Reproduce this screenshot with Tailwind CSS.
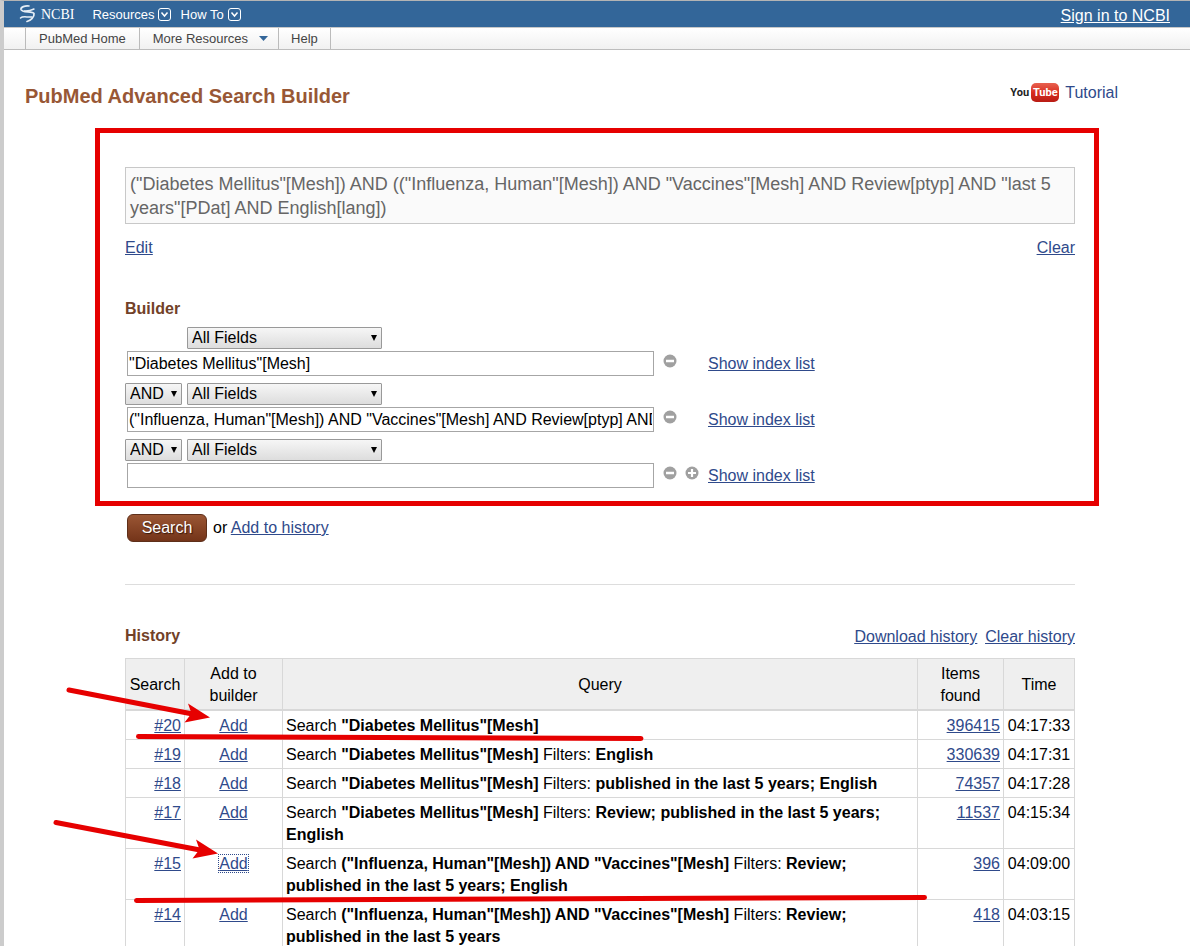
<!DOCTYPE html>
<html lang="en">
<head>
<meta charset="utf-8">
<title>PubMed Advanced Search Builder</title>
<script src="https://cdn.jsdelivr.net/npm/@tailwindcss/browser@4"></script>
</head>
<body class="bg-white font-['Liberation_Sans',Arial,sans-serif] text-base text-black">
<div class="min-h-screen overflow-hidden border-t border-l-4 border-t-[#b4b4b4] border-l-[#cccccc]">
  <header class="flex h-[26px] items-center bg-[#336699] pr-5 pl-[15px] text-[13px] text-white">
    <a href="#" class="flex items-center">
      <svg class="h-5 w-[18px]" viewBox="0 0 18 20" fill="none" stroke="#e6eef6" stroke-linecap="round">
        <path d="M10 2C6 1.500 1.500 3 2 5.500C3 9 13 7 15 9.500C15.500 13 12 16.500 8 17.500" stroke-width="1.700"/>
        <path d="M15 5C12 6.500 8.500 7.200 5.500 7" stroke-width="1.400"/>
        <path d="M1.500 14C4 11.500 8 13.500 13 13" stroke-width="1.500"/>
      </svg>
      <span class="ml-[4px] font-['Liberation_Serif',serif] text-[14px]">NCBI</span>
    </a>
    <button class="ml-[18px] flex items-center gap-[3px] pt-px">Resources
      <svg class="size-[13px]" viewBox="0 0 13 13" fill="none" stroke="white"><rect x=".5" y=".5" width="12" height="12" rx="2.500"/><path d="M3.500 4.500l3 3.500 3-3.500" stroke-width="1.500"/></svg>
    </button>
    <button class="ml-[10px] flex items-center gap-1 pt-px">How To
      <svg class="size-[13px]" viewBox="0 0 13 13" fill="none" stroke="white"><rect x=".5" y=".5" width="12" height="12" rx="2.500"/><path d="M3.500 4.500l3 3.500 3-3.500" stroke-width="1.500"/></svg>
    </button>
    <a href="#" class="ml-auto pt-1 text-base underline">Sign in to NCBI</a>
  </header>
  <nav class="flex h-[23px] border-y border-t-[#c8c8c8] border-b-[#bdbdbd] bg-linear-to-b from-white to-[#f1f1f1] pl-[21px] text-[13px] text-[#444444]">
    <a href="#" class="flex items-center border-l border-[#bbbbbb] px-[13px]">PubMed Home</a>
    <a href="#" class="flex items-center border-l border-[#bbbbbb] pr-[10px] pl-[13px]">More Resources
      <svg class="ml-[11px] h-[5px] w-[9px]" viewBox="0 0 9 5"><path d="M0 0h9L4.500 5z" fill="#336699"/></svg>
    </a>
    <a href="#" class="flex items-center border-x border-[#bbbbbb] px-3">Help</a>
  </nav>

  <main>
    <div class="flex h-[78px] items-center pr-[72px] pl-[21px]">
      <h1 class="pt-[14px] text-[20px] leading-6 font-bold text-[#985735]">PubMed Advanced Search Builder</h1>
      <a href="#" class="ml-auto flex items-center gap-[6px] pt-[7px] leading-6 text-[#2f4a8b]">
        <span class="flex items-center font-[Roboto,'Liberation_Sans',sans-serif] text-[11px] leading-[19px] font-bold">
          <span class="w-[21px] text-[#222222]">You</span>
          <span class="flex w-7 justify-center rounded-[5px] bg-linear-to-b from-[#e8604f] via-[#d92c20] to-[#b81c14] text-white">Tube</span>
        </span>
        Tutorial
      </a>
    </div>

    <section class="mr-[91px] ml-[91px] border-[5px] border-[#e60000] pt-[34px] pr-[19px] pb-[13px] pl-[25px]">
      <div class="border border-[#c8c8c8] bg-[#fafafa] px-1 pt-[4px] pb-[3px] text-[18px] leading-6 text-[#666666]">("Diabetes Mellitus"[Mesh]) AND (("Influenza, Human"[Mesh]) AND "Vaccines"[Mesh] AND Review[ptyp] AND "last 5 years"[PDat] AND English[lang])</div>
      <div class="mt-3 flex justify-between leading-6 text-[#2f4a8b] underline"><a href="#">Edit</a><a href="#">Clear</a></div>
      <h2 class="mt-[37px] leading-6 font-bold text-[#724128]">Builder</h2>

      <div class="mt-[6px] flex flex-col gap-[7px]">
        <div>
          <div class="flex gap-[5px] pl-[62px]">
            <div class="relative w-[195px]">
              <select aria-label="Field 1" class="block h-[22px] w-full appearance-none rounded-[1px] border border-[#999999] bg-linear-to-b from-[#f6f6f6] to-[#dddddd] pl-1 leading-5"><option>All Fields</option></select>
              <svg class="pointer-events-none absolute top-[8px] right-[5px] h-[6px] w-[6px]" viewBox="0 0 6 6"><path d="M0 0h6L3 6z"/></svg>
            </div>
          </div>
          <div class="mt-[2px] flex items-center pl-[2px]">
            <input aria-label="Term 1" type="text" value='"Diabetes Mellitus"[Mesh]' class="h-[25px] w-[527px] border border-[#a6a6a6] px-px">
            <div class="flex w-[54px] gap-2 pb-[5px] pl-[9px]">
              <button aria-label="Remove row 1"><svg class="size-[14px]" viewBox="0 0 14 14"><circle cx="7" cy="7" r="6.500" fill="#a0a0a0"/><path d="M3 7h8" stroke="white" stroke-width="2.500"/></svg></button>
            </div>
            <a href="#" class="text-[#2f4a8b] underline">Show index list</a>
          </div>
        </div>
        <div>
          <div class="flex gap-[5px]">
            <div class="relative w-[57px]">
              <select aria-label="Operator 2" class="block h-[22px] w-full appearance-none rounded-[1px] border border-[#999999] bg-linear-to-b from-[#f6f6f6] to-[#dddddd] pl-1 leading-5"><option>AND</option></select>
              <svg class="pointer-events-none absolute top-[8px] right-[5px] h-[6px] w-[6px]" viewBox="0 0 6 6"><path d="M0 0h6L3 6z"/></svg>
            </div>
            <div class="relative w-[195px]">
              <select aria-label="Field 2" class="block h-[22px] w-full appearance-none rounded-[1px] border border-[#999999] bg-linear-to-b from-[#f6f6f6] to-[#dddddd] pl-1 leading-5"><option>All Fields</option></select>
              <svg class="pointer-events-none absolute top-[8px] right-[5px] h-[6px] w-[6px]" viewBox="0 0 6 6"><path d="M0 0h6L3 6z"/></svg>
            </div>
          </div>
          <div class="mt-[2px] flex items-center pl-[2px]">
            <input aria-label="Term 2" type="text" value='("Influenza, Human"[Mesh]) AND "Vaccines"[Mesh] AND Review[ptyp] AND "last 5 years"[PDat] AND English[lang]' class="h-[25px] w-[527px] border border-[#a6a6a6] px-px">
            <div class="flex w-[54px] gap-2 pb-[5px] pl-[9px]">
              <button aria-label="Remove row 2"><svg class="size-[14px]" viewBox="0 0 14 14"><circle cx="7" cy="7" r="6.500" fill="#a0a0a0"/><path d="M3 7h8" stroke="white" stroke-width="2.500"/></svg></button>
            </div>
            <a href="#" class="text-[#2f4a8b] underline">Show index list</a>
          </div>
        </div>
        <div>
          <div class="flex gap-[5px]">
            <div class="relative w-[57px]">
              <select aria-label="Operator 3" class="block h-[22px] w-full appearance-none rounded-[1px] border border-[#999999] bg-linear-to-b from-[#f6f6f6] to-[#dddddd] pl-1 leading-5"><option>AND</option></select>
              <svg class="pointer-events-none absolute top-[8px] right-[5px] h-[6px] w-[6px]" viewBox="0 0 6 6"><path d="M0 0h6L3 6z"/></svg>
            </div>
            <div class="relative w-[195px]">
              <select aria-label="Field 3" class="block h-[22px] w-full appearance-none rounded-[1px] border border-[#999999] bg-linear-to-b from-[#f6f6f6] to-[#dddddd] pl-1 leading-5"><option>All Fields</option></select>
              <svg class="pointer-events-none absolute top-[8px] right-[5px] h-[6px] w-[6px]" viewBox="0 0 6 6"><path d="M0 0h6L3 6z"/></svg>
            </div>
          </div>
          <div class="mt-[2px] flex items-center pl-[2px]">
            <input aria-label="Term 3" type="text" class="h-[25px] w-[527px] border border-[#a6a6a6] px-px">
            <div class="flex w-[54px] gap-2 pb-[5px] pl-[9px]">
              <button aria-label="Remove row 3"><svg class="size-[14px]" viewBox="0 0 14 14"><circle cx="7" cy="7" r="6.500" fill="#a0a0a0"/><path d="M3 7h8" stroke="white" stroke-width="2.500"/></svg></button>
              <button aria-label="Add row"><svg class="size-[14px]" viewBox="0 0 14 14"><circle cx="7" cy="7" r="6.500" fill="#a0a0a0"/><path d="M3 7h8M7 3v8" stroke="white" stroke-width="2.200"/></svg></button>
            </div>
            <a href="#" class="text-[#2f4a8b] underline">Show index list</a>
          </div>
        </div>
      </div>
    </section>

    <div class="mr-[115px] ml-[121px] flex h-[79px] items-start border-b border-[#dddddd] pt-2 pl-[2px] leading-7">
      <button class="h-7 w-20 rounded-[6px] border border-[#5e2f1a] bg-linear-to-b from-[#9a5634] to-[#743419] leading-[26px] text-white text-shadow-[1px_1px_1px_#33150a]">Search</button>
      <span class="ml-[6px]">or <a href="#" class="text-[#2f4a8b] underline">Add to history</a></span>
    </div>

    <section class="relative mr-[115px] ml-[121px] pt-[38px]">
      <div class="flex items-center justify-between leading-6">
        <h2 class="font-bold text-[#724128]">History</h2>
        <div class="flex gap-2 pt-[2px] text-[#2f4a8b] underline"><a href="#">Download history</a><a href="#">Clear history</a></div>
      </div>
      <table class="mt-[9px] w-full table-fixed border-collapse leading-[22px] [&_a]:text-[#2f4a8b] [&_a]:underline [&_td]:border [&_td]:border-[#d8d8d8] [&_td]:px-[3px] [&_td]:pt-[4px] [&_td]:pb-[2px] [&_td]:align-top [&_th]:border [&_th]:border-[#d8d8d8] [&_th]:px-[3px] [&_th]:pt-[4px] [&_th]:pb-[2px] [&_th]:font-normal">
        <colgroup><col class="w-[59px]"><col class="w-[98px]"><col><col class="w-[86px]"><col class="w-[71px]"></colgroup>
        <thead class="border-b-2 border-[#d8d8d8] bg-[#efefef]">
          <tr><th>Search</th><th>Add to<br>builder</th><th>Query</th><th>Items<br>found</th><th>Time</th></tr>
        </thead>
        <tbody>
          <tr><td class="text-right"><a href="#">#20</a></td><td class="text-center"><a href="#">Add</a></td><td>Search <b>"Diabetes Mellitus"[Mesh]</b></td><td class="text-right"><a href="#">396415</a></td><td class="text-center whitespace-nowrap">04:17:33</td></tr>
          <tr><td class="text-right"><a href="#">#19</a></td><td class="text-center"><a href="#">Add</a></td><td>Search <b>"Diabetes Mellitus"[Mesh]</b> Filters: <b>English</b></td><td class="text-right"><a href="#">330639</a></td><td class="text-center whitespace-nowrap">04:17:31</td></tr>
          <tr><td class="text-right"><a href="#">#18</a></td><td class="text-center"><a href="#">Add</a></td><td>Search <b>"Diabetes Mellitus"[Mesh]</b> Filters: <b>published in the last 5 years; English</b></td><td class="text-right"><a href="#">74357</a></td><td class="text-center whitespace-nowrap">04:17:28</td></tr>
          <tr><td class="text-right"><a href="#">#17</a></td><td class="text-center"><a href="#">Add</a></td><td>Search <b>"Diabetes Mellitus"[Mesh]</b> Filters: <b>Review; published in the last 5 years; English</b></td><td class="text-right"><a href="#">11537</a></td><td class="text-center whitespace-nowrap">04:15:34</td></tr>
          <tr><td class="text-right"><a href="#">#15</a></td><td class="text-center"><a href="#" class="outline-1 outline-dotted outline-[#2f4a8b]">Add</a></td><td>Search <b>("Influenza, Human"[Mesh]) AND "Vaccines"[Mesh]</b> Filters: <b>Review; published in the last 5 years; English</b></td><td class="text-right"><a href="#">396</a></td><td class="text-center whitespace-nowrap">04:09:00</td></tr>
          <tr><td class="text-right"><a href="#">#14</a></td><td class="text-center"><a href="#">Add</a></td><td>Search <b>("Influenza, Human"[Mesh]) AND "Vaccines"[Mesh]</b> Filters: <b>Review; published in the last 5 years</b></td><td class="text-right"><a href="#">418</a></td><td class="text-center whitespace-nowrap">04:03:15</td></tr>
        </tbody>
      </table>
      <!-- Hand-drawn arrows and underlines over the history rows -->
      <svg class="pointer-events-none absolute top-[95px] -left-[75px] h-[230px] w-[885px]" viewBox="50 680 885 230" fill="none" stroke="#e60000" stroke-width="5" stroke-linecap="round">
        <path d="M69 690L190 713.500"/>
        <path d="M210 717.500L188 703.500L191.500 713.500L184.500 722.500z" fill="#e60000" stroke="none"/>
        <path d="M56 822.500L200 850"/>
        <path d="M218 853.500L196 839.500L199.500 849.500L192.500 858.500z" fill="#e60000" stroke="none"/>
        <path d="M138.500 736.500L641 738.500"/>
        <path d="M136.500 900.500L924.500 897.500"/>
      </svg>
    </section>
  </main>
</div>
</body>
</html>
